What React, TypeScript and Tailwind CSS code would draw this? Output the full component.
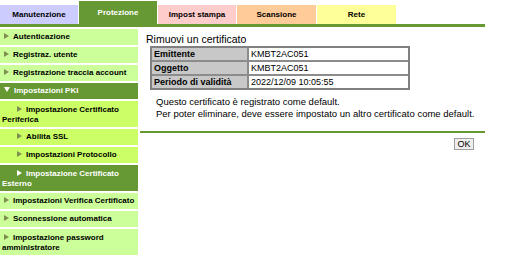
import React from "react";

type MenuItem = {
  label: string;
  level: 1 | 2;
  active?: boolean;
  open?: boolean;
  lines?: 1 | 2;
};

const tabs = [
  { label: "Manutenzione", bg: "bg-[#ccccff]", width: "w-[78px]" },
  { label: "Protezione", bg: "bg-[#669933]", width: "w-[78px]", active: true },
  { label: "Impost stampa", bg: "bg-[#ffcccc]", width: "w-[78px]" },
  { label: "Scansione", bg: "bg-[#ffcc99]", width: "w-[79px]" },
  { label: "Rete", bg: "bg-[#ffff99]", width: "w-[79px]" },
];

const menu: MenuItem[] = [
  { label: "Autenticazione", level: 1 },
  { label: "Registraz. utente", level: 1 },
  { label: "Registrazione traccia account", level: 1 },
  { label: "Impostazioni PKI", level: 1, active: true, open: true },
  { label: "Impostazione Certificato Periferica", level: 2, lines: 2 },
  { label: "Abilita SSL", level: 2 },
  { label: "Impostazioni Protocollo", level: 2 },
  { label: "Impostazione Certificato Esterno", level: 2, active: true, lines: 2 },
  { label: "Impostazioni Verifica Certificato", level: 1 },
  { label: "Sconnessione automatica", level: 1 },
  { label: "Impostazione password amministratore", level: 1, lines: 2 },
];

const certRows = [
  ["Emittente", "KMBT2AC051"],
  ["Oggetto", "KMBT2AC051"],
  ["Periodo di validità", "2022/12/09 10:05:55"],
];

const Arrow = ({ open, color }: { open?: boolean; color: string }) =>
  open ? (
    <svg width="6" height="5" viewBox="0 0 6 5" className="inline-block mr-[4px] align-[1px]">
      <path d="M0 0 L6 0 L3 5 Z" fill={color} />
    </svg>
  ) : (
    <svg width="5" height="6" viewBox="0 0 5 6" className="inline-block mr-[4px] align-[0px]">
      <path d="M0 0 L5 3 L0 6 Z" fill={color} />
    </svg>
  );

const SideMenu = () => (
  <div className="flex flex-col gap-[2px] w-[138px] mt-[2px]">
    {menu.map((item, i) => {
      const bg = item.active
        ? "bg-[#669933] text-white"
        : item.level === 1
        ? "bg-[#ccff99] text-black"
        : "bg-[#ccff66] text-black";
      const indent = item.level === 1 ? "indent-[2px]" : "indent-[15px]";
      const pad = item.lines === 2 ? "pt-[4px] pb-[2px]" : "py-[3px]";
      return (
        <div
          key={i}
          className={`${bg} ${indent} ${pad} pl-[2px] text-[8px] font-bold leading-[10px]`}
        >
          <Arrow open={item.open} color={item.active ? "#ffffff" : "#7f8f4f"} />
          {item.label}
        </div>
      );
    })}
  </div>
);

export default function App() {
  return (
    <div
      className="w-[517px] h-[256px] bg-white overflow-hidden"
      style={{ fontFamily: '"Liberation Sans", Arial, sans-serif' }}
    >
      <div className="flex items-end gap-px h-[24px]">
        {tabs.map((t) => (
          <div
            key={t.label}
            className={`${t.bg} ${t.width} ${
              t.active ? "h-[23px] text-white" : "h-[19px] text-black"
            } flex items-center justify-center text-[8px] font-bold`}
          >
            {t.label}
          </div>
        ))}
      </div>
      <div className="w-[485px] h-[3px] bg-[#669933]" />

      <div className="flex gap-[2px]">
        <SideMenu />

        <div className="flex flex-col w-[345px]">
          <div className="mt-[6px] pl-[6px] text-[10.5px] leading-[12px] text-black">
            Rimuovi un certificato
          </div>

          <div className="ml-[10px] mt-[1px] w-[260px] border-2 border-[#808080] bg-[#8c8c8c] grid grid-cols-[95px_1fr] gap-[2px]">
            {certRows.map(([label, value]) => (
              <React.Fragment key={label}>
                <div className="bg-[#c8c8c8] h-[12px] pl-[2px] text-[9px] leading-[12px] font-bold text-black">
                  {label}
                </div>
                <div className="bg-white h-[12px] pl-[2px] text-[9px] leading-[12px] text-black">
                  {value}
                </div>
              </React.Fragment>
            ))}
          </div>

          <div className="mt-[6px] ml-[16px] text-[9.5px] leading-[12px] text-black">
            <div>Questo certificato è registrato come default.</div>
            <div>Per poter eliminare, deve essere impostato un altro certificato come default.</div>
          </div>

          <div className="mt-[11px] h-[2px] w-full bg-[#669933]" />

          <div className="flex justify-end mr-[11px] mt-[5px]">
            <button className="w-[20px] h-[12px] border border-[#a0a0a0] bg-[#eeeeee] text-[9px] leading-[10px] text-black flex items-center justify-center">
              OK
            </button>
          </div>
        </div>
      </div>
    </div>
  );
}
